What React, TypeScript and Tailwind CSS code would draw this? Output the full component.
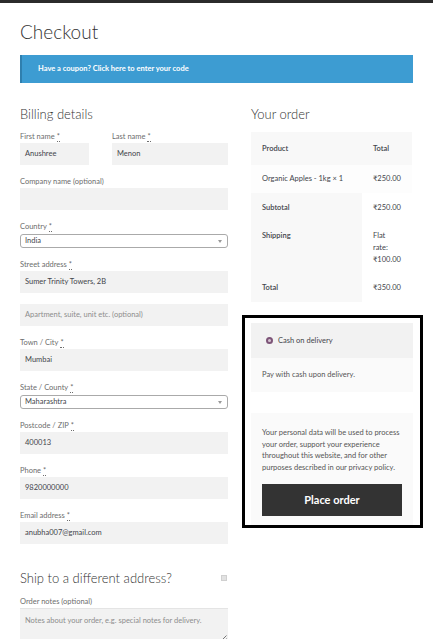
import * as React from 'react';

const FONT = { fontFamily: 'Lato, "Open Sans", sans-serif' };

function Req(): React.ReactElement {
  return <abbr className="no-underline ml-[2px] border-b border-dotted border-[#6d6d6d]">*</abbr>;
}

function Label({ text, required }: { text: string; required?: boolean }): React.ReactElement {
  return (
    <div className="text-[7.5px] leading-[12px] text-[#6d6d6d]">
      {text}
      {required && <Req />}
    </div>
  );
}

function Input({ value, placeholder }: { value?: string; placeholder?: string }): React.ReactElement {
  return (
    <div className="h-[22px] bg-[#f2f2f2] px-[5px] flex items-center text-[7.5px] whitespace-nowrap overflow-hidden">
      {value ? (
        <span className="text-[#43454b]">{value}</span>
      ) : (
        <span className="text-[#8d8d8d]">{placeholder}</span>
      )}
    </div>
  );
}

function Select({ value }: { value: string }): React.ReactElement {
  return (
    <div className="h-[14px] bg-white border border-[#aaaaaa] rounded-[3px] pl-[4px] pr-[5px] flex items-center justify-between text-[7.5px] text-[#43454b]">
      <span>{value}</span>
      <span className="w-0 h-0 border-l-[2.5px] border-r-[2.5px] border-t-[3px] border-l-transparent border-r-transparent border-t-[#999]" />
    </div>
  );
}

function Field({
  label,
  required,
  children,
}: {
  label?: string;
  required?: boolean;
  children: React.ReactNode;
}): React.ReactElement {
  return (
    <div className="flex flex-col">
      {label && <Label text={label} required={required} />}
      {children}
    </div>
  );
}

function BillingForm(): React.ReactElement {
  return (
    <div className="w-[208px] flex flex-col">
      <h3 className="text-[13px] leading-[16px] font-light text-[#333]">Billing details</h3>
      <div className="mt-[9px] flex flex-col gap-[11px]">
        <div className="flex gap-[23px]">
          <div className="w-[69px]">
            <Field label="First name" required>
              <Input value="Anushree" />
            </Field>
          </div>
          <div className="flex-1">
            <Field label="Last name" required>
              <Input value="Menon" />
            </Field>
          </div>
        </div>
        <Field label="Company name (optional)">
          <Input />
        </Field>
        <div className="flex flex-col">
          <Label text="Country" required />
          <div className="mt-[1px]">
            <Select value="India" />
          </div>
        </div>
        <Field label="Street address" required>
          <Input value="Sumer Trinity Towers, 2B" />
        </Field>
        <Input placeholder="Apartment, suite, unit etc. (optional)" />
        <Field label="Town / City" required>
          <Input value="Mumbai" />
        </Field>
        <div className="flex flex-col">
          <Label text="State / County" required />
          <div className="mt-[1px]">
            <Select value="Maharashtra" />
          </div>
        </div>
        <Field label="Postcode / ZIP" required>
          <Input value="400013" />
        </Field>
        <Field label="Phone" required>
          <Input value="9820000000" />
        </Field>
        <Field label="Email address" required>
          <Input value="anubha007@gmail.com" />
        </Field>
      </div>

      <div className="mt-[26px] flex items-center justify-between">
        <h3 className="text-[13px] leading-[16px] font-light text-[#333]">Ship to a different address?</h3>
        <span className="w-[6px] h-[6px] bg-[#e2e2e2] border border-[#d0d0d0] mr-[1px]" />
      </div>

      <div className="mt-[10px] flex flex-col">
        <Label text="Order notes (optional)" />
        <div className="relative h-[50px] bg-[#f2f2f2] border-t border-[#e4e4e4] px-[5px] pt-[6px] text-[7.5px] text-[#8d8d8d]">
          Notes about your order, e.g. special notes for delivery.
          <svg className="absolute right-[1px] top-[26px]" width="7" height="7" viewBox="0 0 7 7">
            <path d="M6.5 0.5 L0.5 6.5 M6.5 3.5 L3.5 6.5" stroke="#555" strokeWidth="0.8" />
          </svg>
        </div>
      </div>
    </div>
  );
}

function OrderReview(): React.ReactElement {
  return (
    <div className="w-[162px] flex flex-col">
      <h3 className="text-[13px] leading-[16px] font-light text-[#333]">Your order</h3>
      <table className="mt-[10px] border-collapse text-[7.5px] text-[#43454b] w-[161px]">
        <thead>
          <tr className="h-[33px]">
            <th className="w-[111px] bg-[#f8f8f8] pl-[11px] text-left font-semibold">Product</th>
            <th className="bg-[#f8f8f8] pl-[11px] text-left font-semibold">Total</th>
          </tr>
        </thead>
        <tbody>
          <tr className="h-[28px]">
            <td className="bg-[#fdfdfd] pl-[11px] whitespace-nowrap">Organic Apples - 1kg × 1</td>
            <td className="bg-[#fdfdfd] pl-[11px]">₹250.00</td>
          </tr>
        </tbody>
        <tfoot>
          <tr className="h-[29px]">
            <th className="bg-[#f8f8f8] pl-[11px] text-left font-semibold">Subtotal</th>
            <td className="bg-white pl-[11px]">₹250.00</td>
          </tr>
          <tr>
            <th className="bg-[#f8f8f8] pl-[11px] pt-[8px] text-left font-semibold align-top leading-[12px]">Shipping</th>
            <td className="bg-white pl-[11px] pt-[8px] pb-[8px] leading-[12px] align-top">
              Flat
              <br />
              rate:
              <br />
              ₹100.00
            </td>
          </tr>
          <tr className="h-[28px]">
            <th className="bg-[#f8f8f8] pl-[11px] text-left font-semibold">Total</th>
            <td className="bg-white pl-[11px]">₹350.00</td>
          </tr>
        </tfoot>
      </table>

      <div className="mt-[13px] ml-[-9px] mr-[-10px] border-[3px] border-black pl-[6px] pr-[7px] pt-[5px]">
        <div className="h-[35px] bg-[#f2f2f2] flex items-center pl-[15px] gap-[5px] text-[7.5px] text-[#43454b]">
          <span className="w-[7px] h-[7px] rounded-full border-[2px] border-[#7d5578] bg-[#d8c6d4]" />
          Cash on delivery
        </div>
        <div className="h-[34px] bg-[#fafafa] flex items-center pl-[11px] text-[7.5px] text-[#555]">
          Pay with cash upon delivery.
        </div>
        <div className="mt-[21px] bg-[#fafafa] px-[11px] pt-[14px] pb-[9px]">
          <p className="text-[7.5px] leading-[11.7px] text-[#555] whitespace-nowrap">
            Your personal data will be used to process
            <br />
            your order, support your experience
            <br />
            throughout this website, and for other
            <br />
            purposes described in our privacy policy.
          </p>
          <button
            type="button"
            className="mt-[10px] w-full h-[32px] bg-[#333333] text-white text-[11px] font-bold"
          >
            Place order
          </button>
        </div>
      </div>
    </div>
  );
}

export default function App(): React.ReactElement {
  return (
    <div className="min-h-screen bg-white overflow-hidden" style={FONT}>
      <div className="h-[3px] bg-[#2b2b2b]" />
      <div className="px-[20px]">
        <h1 className="mt-[17px] text-[19px] leading-[24px] font-light text-[#333]">Checkout</h1>
        <div className="mt-[11px] h-[28px] bg-[#3d9cd2] border-l-[2px] border-[#2f7fae] pl-[16px] flex items-center text-[7.5px] font-bold text-white">
          Have a coupon? Click here to enter your code
        </div>
        <div className="mt-[23px] flex gap-[23px]">
          <BillingForm />
          <OrderReview />
        </div>
      </div>
    </div>
  );
}
